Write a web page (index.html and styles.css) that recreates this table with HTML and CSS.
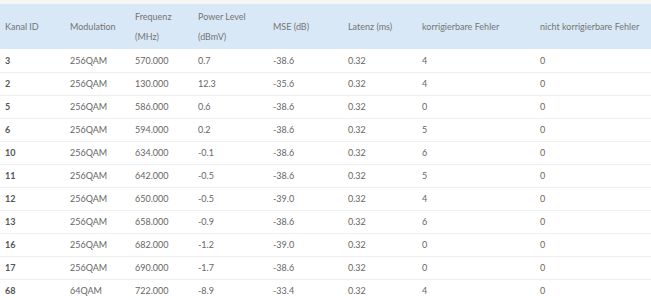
FILE: index.html
```html
<!DOCTYPE html>
<html lang="de">
<head>
<meta charset="utf-8">
<title>Downstream</title>
<link rel="stylesheet" href="styles.css">
</head>
<body>
<div class="wrap">
<table class="tbl">
<colgroup>
<col class="c1"><col class="c2"><col class="c3"><col class="c4"><col class="c5"><col class="c6"><col class="c7"><col class="c8">
</colgroup>
<thead>
<tr><th>Kanal ID</th><th>Modulation</th><th>Frequenz (MHz)</th><th>Power Level (dBmV)</th><th>MSE (dB)</th><th>Latenz (ms)</th><th>korrigierbare Fehler</th><th>nicht korrigierbare Fehler</th></tr>
</thead>
<tbody>
<tr><td>3</td><td>256QAM</td><td>570.000</td><td>0.7</td><td>-38.6</td><td>0.32</td><td>4</td><td>0</td></tr>
<tr><td>2</td><td>256QAM</td><td>130.000</td><td>12.3</td><td>-35.6</td><td>0.32</td><td>4</td><td>0</td></tr>
<tr><td>5</td><td>256QAM</td><td>586.000</td><td>0.6</td><td>-38.6</td><td>0.32</td><td>0</td><td>0</td></tr>
<tr><td>6</td><td>256QAM</td><td>594.000</td><td>0.2</td><td>-38.6</td><td>0.32</td><td>5</td><td>0</td></tr>
<tr><td>10</td><td>256QAM</td><td>634.000</td><td>-0.1</td><td>-38.6</td><td>0.32</td><td>6</td><td>0</td></tr>
<tr><td>11</td><td>256QAM</td><td>642.000</td><td>-0.5</td><td>-38.6</td><td>0.32</td><td>5</td><td>0</td></tr>
<tr><td>12</td><td>256QAM</td><td>650.000</td><td>-0.5</td><td>-39.0</td><td>0.32</td><td>4</td><td>0</td></tr>
<tr><td>13</td><td>256QAM</td><td>658.000</td><td>-0.9</td><td>-38.6</td><td>0.32</td><td>6</td><td>0</td></tr>
<tr><td>16</td><td>256QAM</td><td>682.000</td><td>-1.2</td><td>-39.0</td><td>0.32</td><td>0</td><td>0</td></tr>
<tr><td>17</td><td>256QAM</td><td>690.000</td><td>-1.7</td><td>-38.6</td><td>0.32</td><td>0</td><td>0</td></tr>
<tr><td>68</td><td>64QAM</td><td>722.000</td><td>-8.9</td><td>-33.4</td><td>0.32</td><td>4</td><td>0</td></tr>
</tbody>
</table>
</div>
</body>
</html>
```
FILE: styles.css
```css
html, body { margin: 0; padding: 0; }
body {
  background: #f6f6f4;
  font-family: "Lato", "Liberation Sans", sans-serif;
  font-size: 9px;
  color: #666;
}
.wrap { padding-top: 4px; }
.tbl {
  width: 651px;
  border-collapse: collapse;
  table-layout: fixed;
  background: #fff;
}
.c1 { width: 65px; }
.c2 { width: 65px; }
.c3 { width: 63px; }
.c4 { width: 75px; }
.c5 { width: 75px; }
.c6 { width: 74px; }
.c7 { width: 118px; }
.c8 { width: 116px; }
.tbl th {
  background: #d9e8f6;
  font-weight: normal;
  text-align: left;
  color: #747474;
  line-height: 20px;
  height: 45px;
  padding: 0 5px;
  box-sizing: border-box;
  vertical-align: middle;
}
.c3, .c4 {}
.tbl th.wrapcell { white-space: normal; }
.tbl td {
  height: 23px;
  padding: 0 5px;
  box-sizing: border-box;
  border-top: 1px solid #eeeeee;
  vertical-align: middle;
  white-space: nowrap;
}
.tbl tbody tr:first-child td { border-top: 0; }
.tbl td:first-child { font-weight: bold; color: #555; }
```
